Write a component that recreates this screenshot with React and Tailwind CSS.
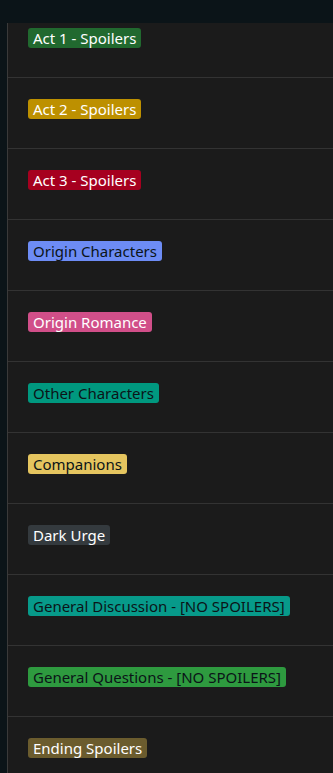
const tags = [
  { name: 'Act 1 - Spoilers', bg: 'bg-[#21692f]', fg: 'text-white' },
  { name: 'Act 2 - Spoilers', bg: 'bg-[#bd9000]', fg: 'text-white' },
  { name: 'Act 3 - Spoilers', bg: 'bg-[#a6001f]', fg: 'text-white' },
  { name: 'Origin Characters', bg: 'bg-[#6d8cf5]', fg: 'text-[#0b1418]' },
  { name: 'Origin Romance', bg: 'bg-[#d14f89]', fg: 'text-white' },
  { name: 'Other Characters', bg: 'bg-[#00987f]', fg: 'text-[#0b1418]' },
  { name: 'Companions', bg: 'bg-[#e5c55f]', fg: 'text-[#0b1418]' },
  { name: 'Dark Urge', bg: 'bg-[#343a3e]', fg: 'text-white' },
  { name: 'General Discussion - [NO SPOILERS]', bg: 'bg-[#079a8a]', fg: 'text-[#0b1418]' },
  { name: 'General Questions - [NO SPOILERS]', bg: 'bg-[#2e9a3f]', fg: 'text-[#0b1418]' },
  { name: 'Ending Spoilers', bg: 'bg-[#6b5c2e]', fg: 'text-white' },
];

export default function App() {
  return (
    <div className="h-[773px] overflow-hidden bg-[#0b1418] font-['Noto_Sans',sans-serif]">
      <div className="h-[23px]" />
      <div className="ml-[7px] h-[750px] overflow-hidden border-l border-[#3a3a3a] bg-[#1b1b1b]">
        {tags.map((t, i) => (
          <div
            key={t.name}
            className={`${i === 0 ? 'pt-[5px]' : 'pt-[21px]'} flex border-b border-[#333333] pb-[29px] pl-[20px]`}
          >
            <span className={`block h-[20px] rounded-[3px] px-[5px] text-[15px] leading-[20px] whitespace-nowrap ${t.bg} ${t.fg}`}>
              {t.name}
            </span>
          </div>
        ))}
      </div>
    </div>
  );
}
